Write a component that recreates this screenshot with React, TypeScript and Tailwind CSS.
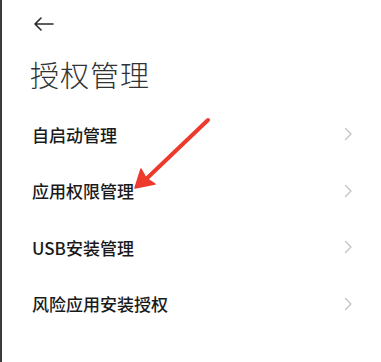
import React from "react";

const items = ["自启动管理", "应用权限管理", "USB安装管理", "风险应用安装授权"];

function Chevron() {
  return (
    <svg width="9" height="14" viewBox="0 0 9 14" fill="none">
      <path d="M1.5 1.5 L7 7 L1.5 12.5" stroke="#c4c4c4" strokeWidth="1.4" strokeLinecap="round" strokeLinejoin="round" />
    </svg>
  );
}

export default function App() {
  return (
    <div
      className="relative flex w-[381px] h-[362px] bg-white overflow-hidden"
      style={{ fontFamily: '"Noto Sans CJK SC", "Noto Sans", sans-serif' }}
    >
      <div className="w-[2px] h-full bg-[#3b3b3b]" />
      <div className="flex-1 flex flex-col">
        <div className="h-[46px] flex items-center pl-[31px] pt-[1px]">
          <svg width="22" height="14" viewBox="0 0 22 14" fill="none">
            <path d="M20 7 H2 M8 1 L2 7 L8 13" stroke="#2a2a2a" strokeWidth="1.6" strokeLinecap="round" strokeLinejoin="round" />
          </svg>
        </div>
        <div className="pl-[28px] pt-[8px] text-[29px] leading-[40px] font-extralight text-[#333333] tracking-[1px]">
          授权管理
        </div>
        <div className="mt-[12px] flex flex-col">
          {items.map((t) => (
            <div key={t} className="h-[56.5px] flex items-center justify-between pl-[30px] pr-[28px]">
              <span className="text-[17px] font-medium text-[#1a1a1a]">{t}</span>
              <Chevron />
            </div>
          ))}
        </div>
      </div>
      <svg className="absolute left-0 top-0 pointer-events-none" width="381" height="362" viewBox="0 0 381 362">
        <line x1="208" y1="120" x2="142" y2="183" stroke="#ee3a2c" strokeWidth="4" strokeLinecap="round" />
        <path d="M135 188 L141 169 L146 178 L155 184 Z" fill="#ee3a2c" stroke="#ee3a2c" strokeWidth="1.5" strokeLinejoin="round" />
      </svg>
    </div>
  );
}
